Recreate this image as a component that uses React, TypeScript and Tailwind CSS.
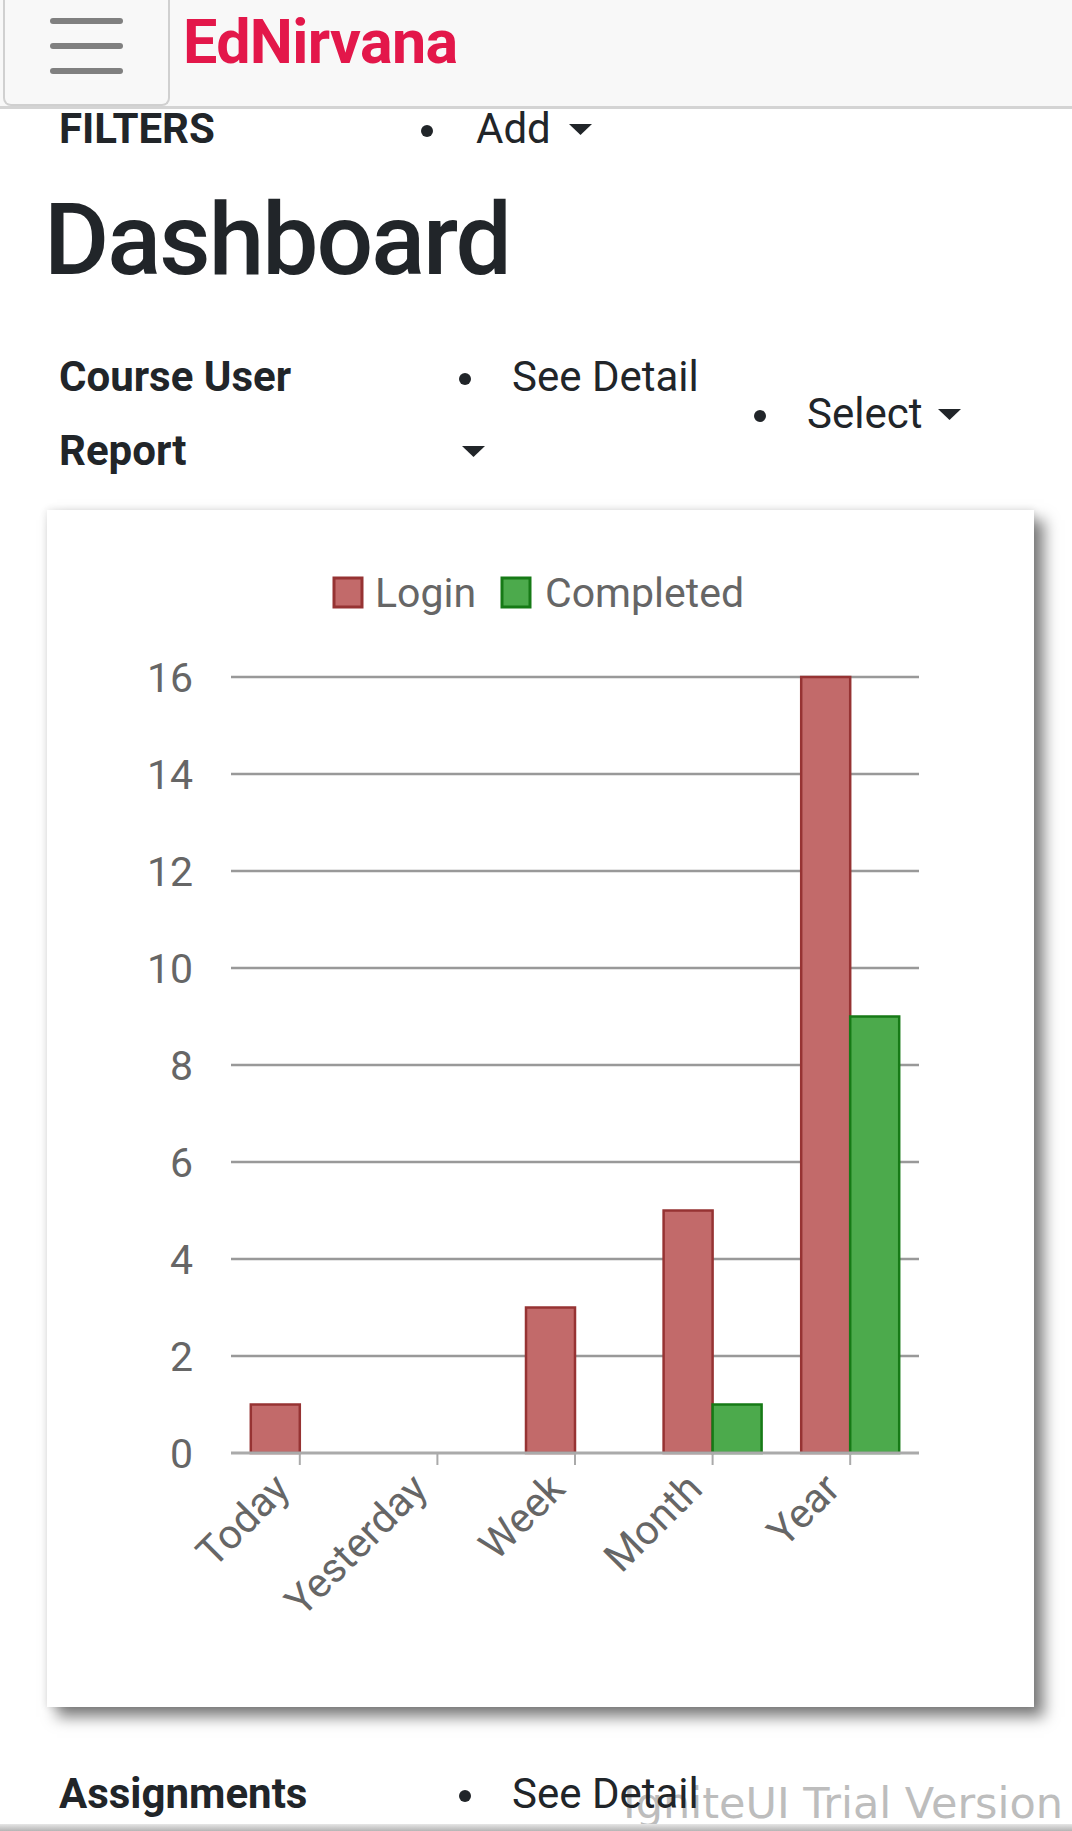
import React from "react";

// Dashboard page: top bar, filter rows and the course user report chart.

const font = { fontFamily: "Roboto, 'Noto Sans', sans-serif" };

type Bar = { label: string; login: number; completed: number };

const data: Bar[] = [
  { label: "Today", login: 1, completed: 0 },
  { label: "Yesterday", login: 0, completed: 0 },
  { label: "Week", login: 3, completed: 0 },
  { label: "Month", login: 5, completed: 1 },
  { label: "Year", login: 16, completed: 9 },
];

const PLOT_LEFT = 184;
const PLOT_RIGHT = 872;
const ZERO_Y = 943;
const UNIT = 48.5;
const BAR_W = 49;

function Caret() {
  return (
    <svg width="23" height="11" viewBox="0 0 23 11" className="shrink-0">
      <path d="M0 0 L23 0 L11.5 11 Z" fill="#212529" />
    </svg>
  );
}

function Dot() {
  return <span className="w-[12px] h-[12px] rounded-full bg-[#212529] shrink-0 translate-y-[2px]" />;
}

function Chart() {
  const step = (PLOT_RIGHT - PLOT_LEFT) / data.length;
  const ticks = [0, 2, 4, 6, 8, 10, 12, 14, 16];
  return (
    <svg width="987" height="1197" viewBox="0 0 987 1197" className="block" style={font}>
      {/* legend */}
      <rect x="287" y="68" width="28" height="29" fill="#c26a6a" stroke="#963333" strokeWidth="3" />
      <text x="328" y="97" fontSize="41" fill="#666">
        Login
      </text>
      <rect x="455" y="68" width="28" height="29" fill="#4caa4c" stroke="#167a16" strokeWidth="3" />
      <text x="498" y="97" fontSize="41" fill="#666">
        Completed
      </text>

      {/* grid + y labels */}
      {ticks.map((v) => {
        const y = ZERO_Y - v * UNIT;
        return (
          <g key={v}>
            {v > 0 && <line x1={PLOT_LEFT} x2={PLOT_RIGHT} y1={y} y2={y} stroke="#999" strokeWidth="2.5" />}
            <text x="146" y={y + 15} fontSize="41" fill="#666" textAnchor="end">
              {v}
            </text>
          </g>
        );
      })}

      {/* bars */}
      {data.map((d, i) => {
        const cx = PLOT_LEFT + step * (i + 0.5);
        return (
          <g key={d.label}>
            {d.login > 0 && (
              <rect
                x={cx - BAR_W}
                y={ZERO_Y - d.login * UNIT}
                width={BAR_W}
                height={d.login * UNIT}
                fill="#c26a6a"
                stroke="#963333"
                strokeWidth="2.5"
              />
            )}
            {d.completed > 0 && (
              <rect
                x={cx}
                y={ZERO_Y - d.completed * UNIT}
                width={BAR_W}
                height={d.completed * UNIT}
                fill="#4caa4c"
                stroke="#167a16"
                strokeWidth="2.5"
              />
            )}
          </g>
        );
      })}

      {/* x axis */}
      <line x1={PLOT_LEFT} x2={PLOT_RIGHT} y1={ZERO_Y} y2={ZERO_Y} stroke="#aaa" strokeWidth="3" />
      {data.map((d, i) => {
        const cx = PLOT_LEFT + step * (i + 0.5);
        const ax = cx - 8;
        const ay = ZERO_Y + 38;
        return (
          <g key={"t" + d.label}>
            <line x1={cx} x2={cx} y1={ZERO_Y} y2={ZERO_Y + 12} stroke="#aaa" strokeWidth="2" />
            <text x={ax} y={ay} fontSize="41" fill="#666" textAnchor="end" transform={`rotate(-45 ${ax} ${ay})`}>
              {d.label}
            </text>
          </g>
        );
      })}
    </svg>
  );
}

export default function App() {
  return (
    <div className="relative w-[1072px] h-[1831px] overflow-hidden text-[#212529]" style={font}>
      {/* Top bar */}
      <header className="h-[109px] bg-[#f8f8f8] border-b-[3px] border-[#d4d4d4] flex items-start">
        <button className="ml-[3px] w-[167px] h-[106px] border-x-[2px] border-b-[2px] border-[#d0d0d0] rounded-b-[8px] flex flex-col items-center justify-start pt-[18px] gap-[19px]">
          <span className="block w-[73px] h-[6px] rounded-full bg-[#808080]" />
          <span className="block w-[73px] h-[6px] rounded-full bg-[#808080]" />
          <span className="block w-[73px] h-[6px] rounded-full bg-[#808080]" />
        </button>
        <span className="ml-[13px] text-[61px] leading-[84px] font-bold text-[#e3174a] tracking-[-0.01em]">
          EdNirvana
        </span>
      </header>

      {/* Filters */}
      <div className="flex items-center pl-[59px] h-[40px] text-[42px] leading-[40px]">
        <span className="w-[362px] font-bold">FILTERS</span>
        <Dot />
        <span className="ml-[43px]">Add</span>
        <span className="ml-[18px]">
          <Caret />
        </span>
      </div>

      <h1 className="mt-[31px] pl-[44px] text-[100px] leading-[120px] font-medium tracking-[-0.02em]">
        Dashboard
      </h1>

      {/* Course user report header */}
      <div className="mt-[40px] pl-[59px] flex text-[42px] leading-[74px]">
        <div className="w-[400px] font-bold">
          <div>Course User</div>
          <div>Report</div>
        </div>
        <div className="w-[295px]">
          <div className="flex items-center">
            <Dot />
            <span className="ml-[41px]">See Detail</span>
          </div>
          <div className="h-[74px] flex items-center pl-[3px]">
            <Caret />
          </div>
        </div>
        <div className="flex items-center">
          <Dot />
          <span className="ml-[41px]">Select</span>
          <span className="ml-[16px]">
            <Caret />
          </span>
        </div>
      </div>

      {/* Chart card */}
      <div className="mt-[22px] ml-[47px] w-[987px] h-[1197px] bg-white shadow-[0_0_8px_rgba(0,0,0,0.12),10px_10px_14px_rgba(0,0,0,0.5)]">
        <Chart />
      </div>

      {/* Assignments */}
      <div className="relative z-10 mt-[57px] pl-[59px] flex items-center text-[42px] leading-[60px]">
        <span className="w-[400px] font-bold">Assignments</span>
        <Dot />
        <span className="ml-[41px]">See Detail</span>
      </div>

      <div
        className="absolute right-[9px] bottom-[6px] text-[43px] leading-none text-[#bdbdbd] whitespace-nowrap"
        style={{ fontFamily: "'DejaVu Sans', Verdana, sans-serif" }}
      >
        IgniteUI Trial Version
      </div>
      <div className="absolute left-0 right-0 bottom-0 h-[7px] bg-gradient-to-b from-[#e6e6e6] to-[#b5b5b5]" />
    </div>
  );
}
